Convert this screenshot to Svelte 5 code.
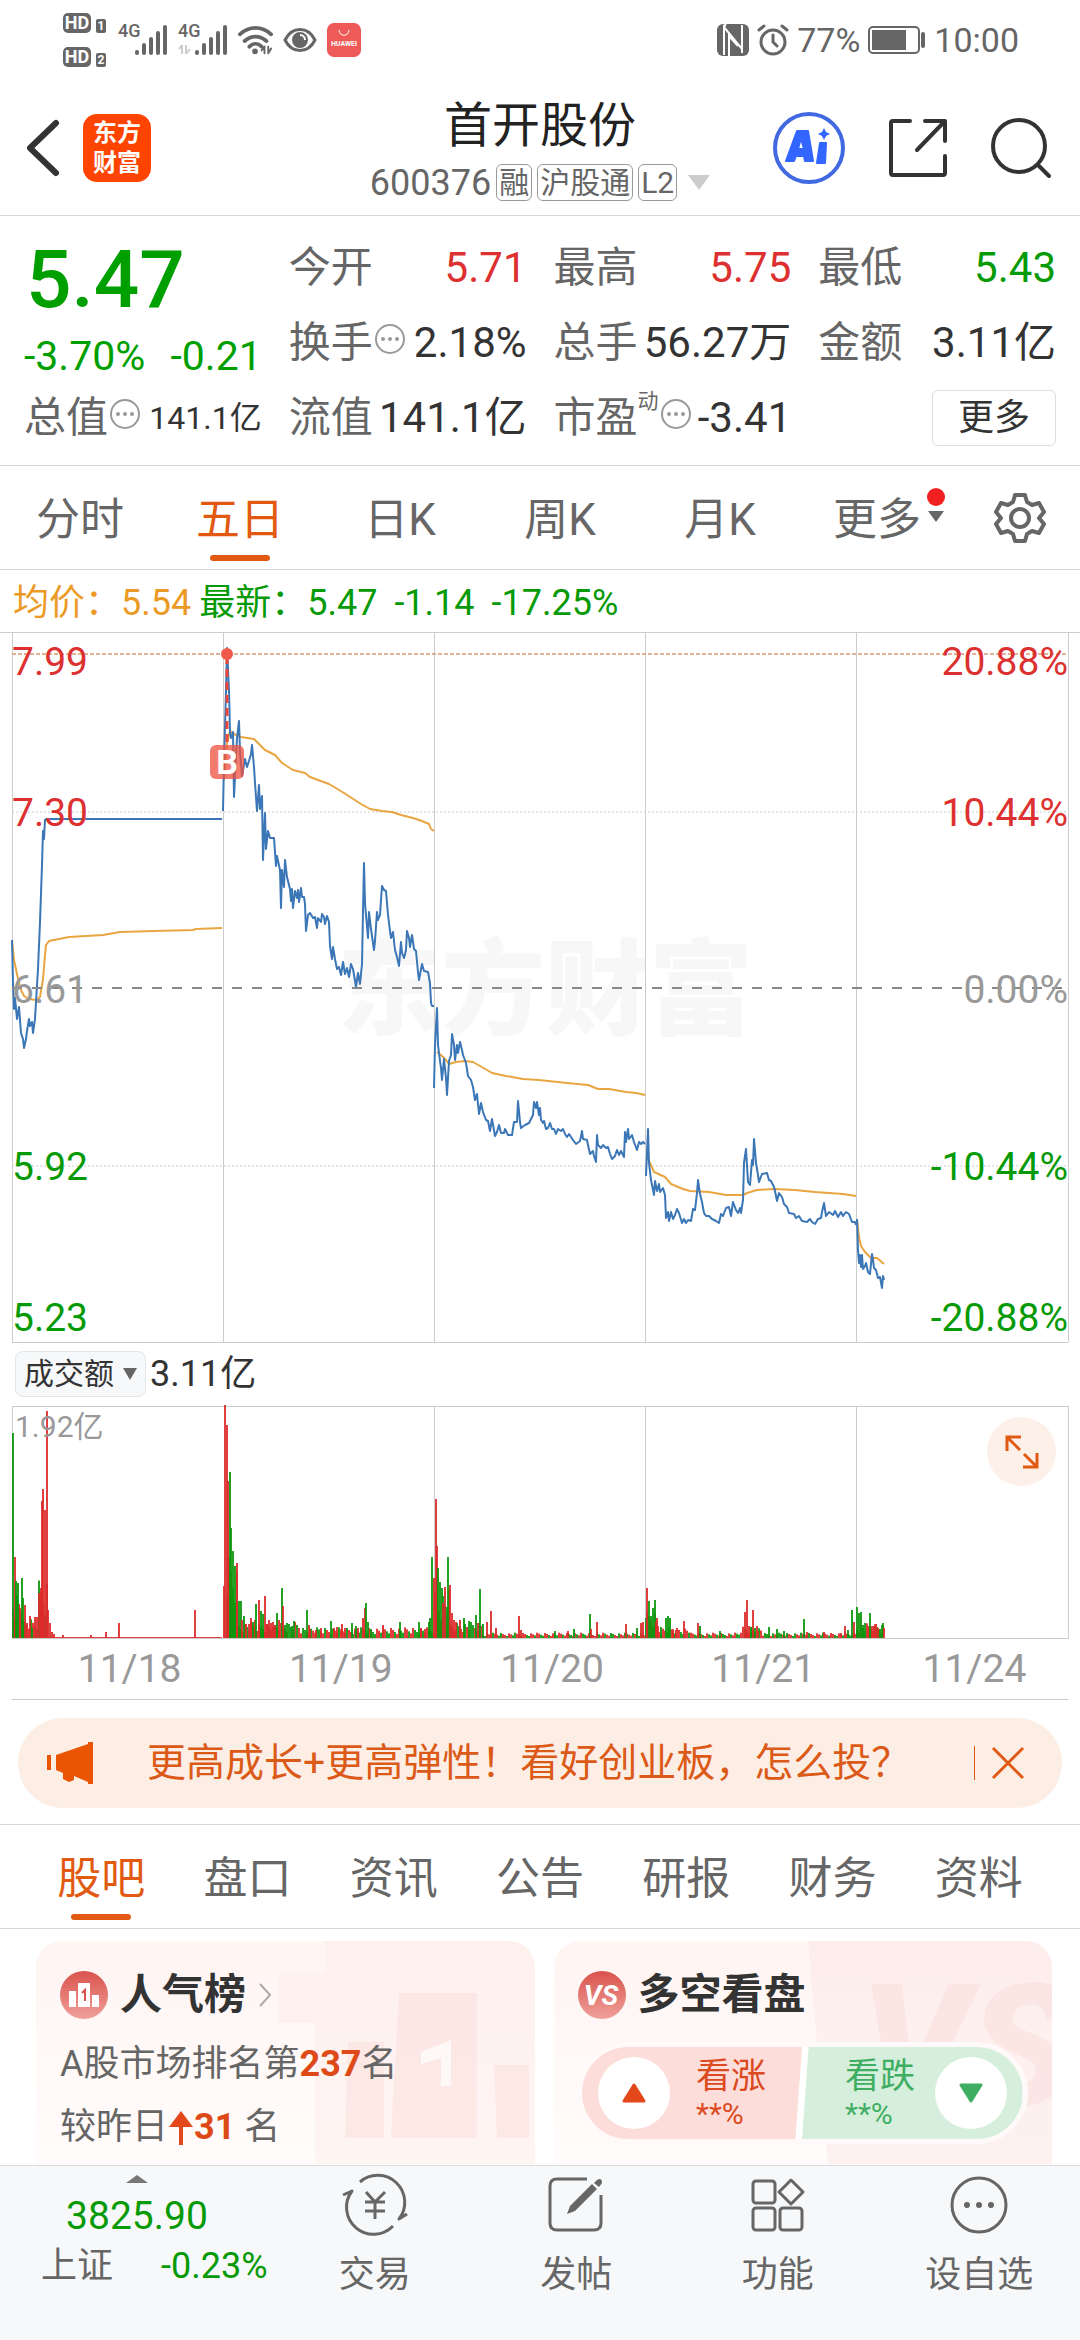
<script>
    let periods = ['分时', '五日', '日K', '周K', '月K', '更多'];
    let activePeriod = '五日';

    let sections = ['股吧', '盘口', '资讯', '公告', '研报', '财务', '资料'];
    let activeSection = '股吧';

    let showNotice = true;

    let quote = [
        { label: '今开', value: '5.71', tone: 'up' },
        { label: '最高', value: '5.75', tone: 'up' },
        { label: '最低', value: '5.43', tone: 'down' },
        { label: '换手', value: '2.18%', info: true },
        { label: '总手', value: '56.27万' },
        { label: '金额', value: '3.11亿' },
        { label: '总值', value: '141.1亿', info: true, small: true },
        { label: '流值', value: '141.1亿' },
        { label: '市盈', sup: '动', value: '-3.41', info: true }
    ];

    let dates = ['11/18', '11/19', '11/20', '11/21', '11/24'];

    // Left and right axis of the price chart
    let axis = [
        { y: 675, price: '7.99', pct: '20.88%', tone: 'up' },
        { y: 826, price: '7.30', pct: '10.44%', tone: 'up' },
        { y: 1003, price: '6.61', pct: '0.00%', tone: 'flat' },
        { y: 1180, price: '5.92', pct: '-10.44%', tone: 'down' },
        { y: 1331, price: '5.23', pct: '-20.88%', tone: 'down' }
    ];

    // One polyline per trading day
    let priceLines = [
        '12,940 13,983 14,1009 15,998 17,1019 19,1007 21,1033 23,1039 24,1048 26,1039 27,1031 29,1019 30,1026 32,1022 33,1033 35,1019 36,1002 38,969 40,922 42,865 43,831 44,839 45,820 47,819 222,819',
        '223,811 224,762 226,691 227,648 229,691 230,733 231,738 233,732 234,797 236,757 237,738 239,721 240,752 242,776 245,759 247,767 249,761 251,754 252,745 254,767 255,783 257,811 259,785 260,809 262,796 263,860 265,813 266,849 268,831 270,838 274,838 276,866 277,856 280,870 281,908 282,870 284,887 285,860 287,877 290,889 291,901 292,889 293,908 295,891 297,898 298,890 299,902 301,888 302,897 304,897 305,904 306,931 308,915 310,913 313,918 315,917 317,928 318,918 321,922 322,914 324,917 325,924 327,916 329,922 330,946 332,959 333,947 335,959 337,969 339,967 341,975 343,962 345,974 347,968 349,977 351,964 353,969 356,987 358,973 360,984 362,964 363,912 364,863 365,903 368,938 369,912 371,929 374,950 375,941 377,912 378,920 380,915 382,886 384,890 386,891 388,915 390,931 391,938 393,932 395,950 397,957 399,966 401,942 402,953 404,958 406,950 407,931 409,938 410,947 412,935 414,949 416,951 418,972 419,980 422,964 424,971 428,972 430,983 431,1003 432,1006 434,1006',
        '434,1088 435,1045 437,1008 438,1045 440,1061 441,1068 442,1080 444,1059 446,1078 447,1095 449,1061 451,1055 452,1034 454,1045 455,1060 457,1045 458,1053 460,1042 462,1050 463,1055 466,1063 468,1076 471,1080 473,1087 475,1100 477,1094 479,1114 481,1103 483,1112 486,1120 488,1121 490,1131 492,1119 495,1136 497,1132 499,1125 501,1133 504,1133 505,1129 508,1135 512,1135 514,1122 517,1122 518,1101 520,1122 521,1128 525,1125 529,1123 531,1119 533,1115 534,1102 536,1108 537,1102 539,1115 540,1108 541,1120 543,1123 544,1121 546,1129 548,1128 550,1123 552,1129 554,1129 556,1134 558,1129 561,1131 563,1129 565,1134 567,1137 569,1134 573,1140 576,1144 580,1141 582,1131 583,1139 587,1140 588,1145 590,1154 593,1151 594,1156 596,1162 597,1135 598,1145 601,1148 603,1145 606,1148 608,1147 610,1154 612,1159 615,1156 617,1150 619,1155 621,1151 624,1157 625,1132 626,1142 628,1129 629,1139 632,1135 634,1142 637,1150 639,1142 641,1144 643,1142 645,1144',
        '646,1176 648,1129 649,1163 651,1180 654,1195 655,1181 657,1191 659,1184 660,1192 663,1188 665,1195 666,1218 668,1212 669,1221 671,1212 673,1219 675,1215 677,1209 679,1213 682,1223 684,1219 686,1223 688,1220 691,1221 693,1209 695,1210 697,1193 698,1180 700,1194 702,1202 704,1213 706,1216 709,1216 712,1219 716,1221 719,1223 721,1214 723,1216 726,1208 729,1207 731,1216 733,1202 736,1210 738,1213 740,1208 741,1213 743,1200 744,1163 746,1149 748,1182 750,1185 752,1160 753,1165 754,1139 756,1163 758,1175 759,1182 762,1174 767,1173 769,1180 771,1181 774,1187 775,1191 777,1201 779,1193 782,1197 784,1204 787,1207 789,1213 794,1214 796,1218 799,1216 802,1221 807,1222 810,1219 812,1222 815,1224 818,1219 821,1218 822,1212 824,1203 826,1216 829,1212 833,1215 835,1211 838,1217 841,1212 843,1216 846,1212 849,1214 852,1222 855,1222 856,1225',
        '857,1219 858,1250 859,1263 860,1255 861,1267 862,1255 863,1269 865,1266 866,1263 868,1272 870,1274 872,1254 873,1260 874,1268 876,1270 878,1278 880,1277 882,1288 883,1276 884,1280'
    ];
    let averageLines = [
        '12,940 14,960 17,974 20,988 24,996 29,999 36,1000 40,997 43,979 45,955 46,945 49,941 69,937 103,935 120,932 155,931 193,930 196,929 222,928',
        '224,780 227,743 230,731 234,734 241,737 254,739 259,744 265,750 275,755 282,763 293,770 305,773 310,777 329,784 344,793 361,804 370,809 382,811 392,812 401,815 413,818 422,821 429,824 431,829 434,831',
        '437,1052 441,1055 446,1060 449,1064 456,1062 465,1061 473,1062 480,1066 487,1070 492,1073 506,1076 523,1079 539,1080 567,1083 588,1085 598,1089 609,1089 626,1092 636,1093 645,1095',
        '647,1157 650,1163 654,1172 665,1177 671,1184 683,1189 690,1191 709,1192 726,1195 743,1195 747,1193 757,1190 774,1189 795,1190 815,1192 843,1194 856,1196',
        '857,1219 859,1237 861,1246 865,1252 871,1258 877,1258 884,1264'
    ];

    // Turnover peaks as [x, height]; a negative height is a falling minute
    let peaks = [
        [12, -205], [14, 81], [15, -57], [17, -55], [19, 30], [21, -60], [22, -40], [24, 33], [26, 15], [29, 22], [31, -10], [34, 21], [36, 21], [38, 45], [40, 50], [41, 137], [42, 149], [44, 128], [46, 227], [47, 28], [49, 15], [51, 6], [53, 4], [62, 3], [90, 3], [105, 6], [118, 15], [194, 28],
        [223, 52], [224, 233], [226, 213], [227, 157], [229, -166], [230, -110], [232, -87], [234, -72], [236, 65], [238, -37], [240, -37], [241, 18], [243, -22], [245, 14], [248, 14], [250, 20], [252, -16], [254, 18], [255, -34], [258, 38], [260, -27], [262, -24], [264, 42], [266, 14], [268, 18], [270, 15], [272, 11], [274, 13], [276, -25], [278, 18], [281, -50], [282, 32], [284, -13], [286, -15], [291, -12], [293, -17], [306, -28], [308, 13], [309, 9], [315, 8], [320, 10], [330, -17], [333, 10], [336, 11], [341, 14], [344, 10], [351, -15], [355, -12], [357, 10], [362, 20], [364, 30], [365, -35], [367, -16], [370, -9], [382, 13], [399, -16], [418, -16], [420, 10], [424, 9], [428, -16], [429, -20], [431, -81],
        [433, 60], [435, 139], [436, 92], [437, -70], [439, -56], [441, -50], [442, 35], [444, 51], [446, -31], [447, -81], [449, 53], [451, 25], [453, 18], [455, 16], [459, 18], [463, -20], [468, -17], [475, -23], [477, 15], [479, -49], [482, -14], [486, 16], [490, 27], [495, 10], [518, 22], [520, 8], [554, -7], [567, 7], [573, -9], [589, -24], [590, 9], [596, 16], [625, 14], [636, -10], [640, 15], [642, 16], [645, -20],
        [646, 50], [648, -37], [650, -22], [652, -30], [654, -38], [655, 16], [657, 12], [660, -11], [665, -20], [667, -22], [669, -20], [672, 9], [675, 8], [683, 17], [697, 15], [699, -12], [719, -7], [744, 26], [746, 38], [748, 12], [750, -11], [752, 28], [754, -10], [757, 7], [768, -11], [776, -9], [783, -7], [803, -19], [806, 6], [823, 6], [840, 5], [844, 12], [847, -8], [851, -28], [853, 16],
        [856, -31], [858, -25], [860, -26], [862, -13], [864, -15], [867, 11], [869, -25], [871, 12], [873, 12], [875, 14], [877, 10], [879, -9], [881, -13], [882, -15], [883, 10]
    ];

    // Minutes between the peaks: [from, to, typical height]
    let quiet = [[12, 24, 34], [24, 38, 14], [38, 48, 46], [48, 222, 1], [226, 238, 60], [238, 300, 12], [300, 434, 8], [434, 450, 36], [450, 482, 12], [482, 645, 4], [646, 658, 20], [658, 690, 8], [690, 740, 4], [740, 762, 9], [762, 856, 4], [856, 884, 11]];

    let bars = [];
    for (const [from, to, size] of quiet) {
        for (let x = from; x < to; x += 2) {
            const h = size === 1 ? 1 : size / 2 + ((x * 37) % 11) * size / 12;
            bars.push([x, size === 1 || (x * 13) % 7 < 4 ? h : -h]);
        }
    }
    bars = [...bars, ...peaks];

    const verticals = [12, 223, 434, 645, 856, 1068];
</script>

<svelte:head>
    <title>首开股份 600376</title>
</svelte:head>

<div class="app">
    <div class="status">
        <div class="hd">
            {#each [1, 2] as sim}
                <span><b>HD</b><i>{sim}</i></span>
            {/each}
        </div>
        {#each [false, true] as active}
            <svg width="50" height="34" viewBox="0 0 50 34">
                <text x="0" y="14" class="net">4G</text>
                {#if active}
                    <path d="M4 22v9M4 22l-3 4M8 22v9M8 31l4-5" stroke="#ccc" stroke-width="2" fill="none"/>
                {/if}
                <path d="M19 29v1M26 22v8M33 16v14M40 10v20M47 4v26" stroke="#666" stroke-width="4" stroke-linecap="round"/>
            </svg>
        {/each}
        <svg width="35" height="34" viewBox="0 0 37 34" fill="none" stroke="#666" stroke-width="4" stroke-linecap="round">
            <path d="M2 11C12 2 25 2 35 11M7 18c7-6 16-6 23 0M12 24c4-4 9-4 13 0"/>
            <circle cx="18" cy="29" r="3" fill="#666" stroke="none"/>
            <path d="M28 24v7M28 24l-3 4M32 24v7M32 31l3-5" stroke-width="2"/>
        </svg>
        <svg width="34" height="34" viewBox="0 0 34 34">
            <path d="M2 17C9 3 25 3 32 17C25 31 9 31 2 17Z" fill="none" stroke="#666" stroke-width="3"/>
            <circle cx="17" cy="17" r="8" fill="#666"/>
            <path d="M17 12a5 5 0 0 1 5 5" stroke="#fff" stroke-width="2" fill="none"/>
        </svg>
        <div class="huawei">
            <svg width="12" height="8" viewBox="0 0 12 8"><path d="M1 1c0 7 10 7 10 0" stroke="#fff" fill="none"/></svg>
            HUAWEI
        </div>
        <div class="status-right">
            <svg width="32" height="32" viewBox="0 0 32 32">
                <rect width="32" height="32" rx="6" fill="#666"/>
                <path d="M7 31V3L25 25V1M7 3C8 1 8 1 9 0M25 29V10M12 32V12L21 22" stroke="#fff" stroke-width="2" fill="none"/>
            </svg>
            <svg width="32" height="34" viewBox="0 0 32 34" fill="none" stroke="#666" stroke-width="3" stroke-linecap="round">
                <circle cx="16" cy="19" r="12"/>
                <path d="M16 12v7l4 4M2 7l5-4M30 7l-5-4"/>
            </svg>
            <span>77%</span>
            <svg width="58" height="28" viewBox="0 0 58 28">
                <rect x="1" y="1" width="50" height="26" rx="4" fill="none" stroke="#666" stroke-width="2"/>
                <path d="M4 4H38V24H4Z" fill="#666"/>
                <rect x="53" y="6" width="4" height="16" rx="2" fill="#666"/>
            </svg>
            <span>10:00</span>
        </div>
    </div>

    <header class="header">
        <div class="side">
            <button aria-label="返回">
                <svg width="34" height="58" viewBox="0 0 34 58"><path d="M30 4L4 29L30 54" fill="none" stroke="#333" stroke-width="6" stroke-linecap="round" stroke-linejoin="round"/></svg>
            </button>
            <button class="logo"><span>东方</span><span>财富</span></button>
        </div>
        <div class="stock">
            <h1>首开股份</h1>
            <div class="code">
                <span>600376</span>
                <span class="tag">融</span>
                <span class="tag">沪股通</span>
                <span class="tag">L2</span>
                <svg width="22" height="16" viewBox="0 0 22 16"><path d="M0 0H22L11 15Z" fill="#ccc"/></svg>
            </div>
        </div>
        <div class="side actions">
            <button aria-label="AI">
                <svg width="74" height="74" viewBox="0 0 74 74">
                    <circle cx="37" cy="37" r="34" fill="none" stroke="#4169e1" stroke-width="4"/>
                    <path d="M25 20H36L41 50H33L32 45H24L22 50H14ZM29 27L26 38H32Z" fill="#3366ff" fill-rule="evenodd" stroke="#3366ff" stroke-width="2" stroke-linejoin="round"/>
                    <path d="M48 32H54L53 52H45Z" fill="#3366ff" stroke="#3366ff" stroke-width="2" stroke-linejoin="round"/>
                    <path d="M52 17L54 21L58 23L54 25L52 29L50 25L46 23L50 21Z" fill="#3366ff"/>
                </svg>
            </button>
            <button aria-label="分享">
                <svg width="60" height="60" viewBox="0 0 60 60" fill="none" stroke="#333" stroke-width="4" stroke-linecap="round" stroke-linejoin="round">
                    <path d="M22 3H5Q3 3 3 5V55Q3 57 5 57H55Q57 57 57 55V38M37 3H57V23M56 4L29 32"/>
                </svg>
            </button>
            <button aria-label="搜索">
                <svg width="62" height="62" viewBox="0 0 62 62" fill="none" stroke="#333" stroke-width="4" stroke-linecap="round">
                    <circle cx="29" cy="29" r="26"/>
                    <path d="M48 48L59 59"/>
                </svg>
            </button>
        </div>
    </header>

    <section class="quote">
        <div class="last">
            <strong>5.47</strong>
            <div class="change"><span>-3.70%</span><span>-0.21</span></div>
        </div>
        {#each quote as item}
            <div class="item">
                <span class="label">{item.label}{#if item.sup}<sup>{item.sup}</sup>{/if}</span>
                {#if item.info}
                    <svg class="info" width="30" height="30" viewBox="0 0 30 30">
                        <circle cx="15" cy="15" r="14" fill="none" stroke="#999" stroke-width="2"/>
                        <path d="M8 15h0M15 15h0M22 15h0" stroke="#999" stroke-width="4" stroke-linecap="round"/>
                    </svg>
                {/if}
                <span class="value {item.tone ?? ''}" class:small={item.small}>{item.value}</span>
            </div>
        {/each}
        <div class="item"><button class="more">更多</button></div>
    </section>

    <nav class="periods">
        {#each periods as period}
            <button class="tab" class:active={period === activePeriod} on:click={() => activePeriod = period}>
                {period}
                {#if period === '更多'}
                    <svg width="18" height="34" viewBox="0 0 18 34">
                        <circle cx="9" cy="9" r="9" fill="#f02020"/>
                        <path d="M1 23H17L9 34Z" fill="#666"/>
                    </svg>
                {/if}
            </button>
        {/each}
        <button class="gear" aria-label="设置">
            <svg width="52" height="52" viewBox="0 0 52 52" fill="none" stroke="#666" stroke-width="4" stroke-linejoin="round">
                <path d="M21 3H31L33 10L38 13L45 11L50 20L45 26L50 32L45 41L38 39L33 42L31 49H21L19 42L14 39L7 41L2 32L7 26L2 20L7 11L14 13L19 10Z"/>
                <circle cx="26" cy="26" r="9"/>
            </svg>
        </button>
    </nav>

    <div class="legend">
        <span class="avg">均价：5.54</span>
        <span>最新：5.47</span>
        <span>-1.14</span>
        <span>-17.25%</span>
    </div>

    <svg class="chart" viewBox="0 631 1080 712">
        <text class="watermark" x="545" y="1027" text-anchor="middle">东方财富</text>
        <path d="M0 632H1080M12 1342H1068" class="grid"/>
        {#each verticals as x}
            <path d="M{x} 632V1342" class="grid"/>
        {/each}
        <path d="M12 654H1068" stroke="#d9a07a" stroke-width="2" stroke-opacity="0.8" stroke-dasharray="4 2"/>
        <path d="M12 812H1068M12 1166H1068" stroke="#ccc" stroke-dasharray="2 2"/>
        {#each averageLines as points}
            <polyline {points} class="average"/>
        {/each}
        {#each priceLines as points}
            <polyline {points} class="price"/>
        {/each}
        <path d="M12 988H1068" stroke="#888" stroke-width="2" stroke-dasharray="10 10"/>
        {#each axis as row}
            <text class="axis {row.tone}" x="12" y={row.y}>{row.price}</text>
            <text class="axis {row.tone}" x="1068" y={row.y} text-anchor="end">{row.pct}</text>
        {/each}
        <path d="M227 656V746" stroke="#e8483c" stroke-width="3" stroke-dasharray="8 5"/>
        <circle cx="227" cy="654" r="6" fill="#f05a4a"/>
        <rect x="210" y="745" width="34" height="34" rx="6" fill="#f0503f" fill-opacity="0.75"/>
        <text class="buy" x="227" y="774" text-anchor="middle">B</text>
    </svg>

    <div class="indicator">
        <button>成交额<svg width="14" height="12" viewBox="0 0 14 12"><path d="M0 0H14L7 12Z" fill="#666"/></svg></button>
        <span>3.11亿</span>
    </div>

    <div class="volume">
        <svg class="chart" viewBox="0 0 1080 234">
            <path d="M12 1H1068V233H12Z" class="grid"/>
            {#each [434, 645, 856] as x}
                <path d="M{x} 1V233" class="grid"/>
            {/each}
            {#each bars as [x, h]}
                <rect {x} y={233 - Math.abs(h)} width="2" height={Math.abs(h)} fill={h > 0 ? '#dc2a2a' : '#0c960c'} fill-opacity="0.9"/>
            {/each}
            <text class="peak" x="15" y="32">1.92亿</text>
        </svg>
        <button class="expand" aria-label="全屏">
            <svg width="36" height="36" viewBox="0 0 36 36" fill="none" stroke="#e05a14" stroke-width="3">
                <path d="M3 17V3H17M3 3L16 16M20 20L33 33M19 33H33V19"/>
            </svg>
        </button>
    </div>
    <div class="dates">
        {#each dates as date}
            <span>{date}</span>
        {/each}
    </div>
    <hr>

    {#if showNotice}
        <div class="notice">
            <svg width="46" height="42" viewBox="0 0 46 42">
                <path d="M0 13H4V28H0ZM9 13L41 2V0H46V42H41V40L27 34V38L22 40L16 37V31L9 28Z" fill="#ea5504"/>
            </svg>
            <a href="#notice">更高成长+更高弹性！看好创业板，怎么投？</a>
            <button aria-label="关闭" on:click={() => showNotice = false}>
                <svg width="34" height="34" viewBox="0 0 34 34"><path d="M2 2L32 32M32 2L2 32" stroke="#e05a14" stroke-width="3"/></svg>
            </button>
        </div>
    {/if}

    <nav class="sections">
        {#each sections as section}
            <button class="tab" class:active={section === activeSection} on:click={() => activeSection = section}>{section}</button>
        {/each}
    </nav>

    <div class="cards">
        <section class="card">
            <svg class="deco" width="270" height="223" viewBox="0 0 270 223" fill="#fbe3e0">
                <path d="M14 32H60V0H270V223H50V82H14Z" fill-opacity="0.3"/>
                <path d="M83 101H119V197H80ZM134 52H212V197H126ZM229 124H264V197H232Z" fill-opacity="0.7"/>
                <path d="M156 111L186 99V145H176V117L156 123Z" fill="#fff" fill-opacity="0.7"/>
            </svg>
            <h2>
                <svg width="48" height="48" viewBox="0 0 48 48">
                    <defs><linearGradient id="badge" x2="0" y2="1"><stop stop-color="#d9534c"/><stop offset="1" stop-color="#f0a09a"/></linearGradient></defs>
                    <circle cx="24" cy="24" r="24" fill="url(#badge)"/>
                    <path d="M9 20H16V36H9ZM18 12H30V36H18ZM32 24H39V36H32Z" fill="#fff"/>
                    <path d="M22 22L25 19V30" stroke="#d9534c" stroke-width="2" fill="none"/>
                </svg>
                人气榜
                <svg width="14" height="26" viewBox="0 0 14 26"><path d="M2 2L12 13L2 24" fill="none" stroke="#aaa" stroke-width="2"/></svg>
            </h2>
            <p>A股市场排名第<b>237</b>名</p>
            <p>较昨日<svg width="26" height="34" viewBox="0 0 26 34"><path d="M13 0L25 16H15V34H11V16H1Z" fill="#e2481a"/></svg><b>31</b> 名</p>
        </section>
        <section class="card">
            <svg class="deco" width="244" height="223" viewBox="0 0 244 223">
                <path d="M0 0H244V223H20Z" fill="#fbe3e0" fill-opacity="0.4"/>
                <text class="deco-vs" x="52" y="164">VS</text>
            </svg>
            <h2>
                <svg width="48" height="48" viewBox="0 0 48 48">
                    <circle cx="24" cy="24" r="24" fill="url(#badge)"/>
                    <text class="vs" x="23" y="34" text-anchor="middle">VS</text>
                </svg>
                多空看盘
            </h2>
            <div class="vote">
                <button class="bull">
                    <span class="knob"><svg width="24" height="20" viewBox="0 0 24 20"><path d="M12 2L22 18H2Z" fill="#e2481a" stroke="#e2481a" stroke-width="3" stroke-linejoin="round"/></svg></span>
                    <span>看涨<small>**%</small></span>
                </button>
                <button class="bear">
                    <span>看跌<small>**%</small></span>
                    <span class="knob"><svg width="24" height="20" viewBox="0 0 24 20"><path d="M12 18L22 2H2Z" fill="#3fae63" stroke="#3fae63" stroke-width="3" stroke-linejoin="round"/></svg></span>
                </button>
            </div>
        </section>
    </div>

    <footer class="bottom">
        <button class="index">
            <svg width="22" height="8" viewBox="0 0 22 8"><path d="M0 8L11 0L22 8Z" fill="#777"/></svg>
            <strong>3825.90</strong>
            <span class="index-row"><span>上证</span><span class="down">-0.23%</span></span>
        </button>
        <button>
            <svg width="66" height="60" viewBox="0 0 66 60" fill="none" stroke="#666" stroke-width="3" stroke-linejoin="round">
                <path d="M18 7A27 27 0 0 1 57 44L65 39M51 51A27 27 0 0 1 10 16L1 20"/>
                <path d="M24 17L33 27L43 17M33 27V44M23 27H43M23 36H43"/>
            </svg>
            交易
        </button>
        <button>
            <svg width="60" height="60" viewBox="0 0 60 60" fill="none" stroke="#666" stroke-width="3">
                <path d="M41 4H11Q4 4 4 11V48Q4 55 11 55H48Q55 55 55 48V20"/>
                <path d="M21 39L24 31L46 9L51 14L29 36ZM48 8L51 5Q56 2 56 8L53 12Z" fill="#666" stroke="none"/>
            </svg>
            发帖
        </button>
        <button>
            <svg width="60" height="60" viewBox="0 0 60 60" fill="none" stroke="#666" stroke-width="3">
                <rect x="5" y="6" width="22" height="22" rx="3"/>
                <rect x="5" y="33" width="22" height="22" rx="3"/>
                <rect x="32" y="33" width="22" height="22" rx="3"/>
                <path d="M43 5L55 17L43 29L31 17Z" stroke-linejoin="round"/>
            </svg>
            功能
        </button>
        <button>
            <svg width="60" height="60" viewBox="0 0 60 60" fill="none" stroke="#666" stroke-width="3">
                <circle cx="30" cy="30" r="27"/>
                <path d="M18 30h0M30 30h0M42 30h0" stroke-width="6" stroke-linecap="round"/>
            </svg>
            设自选
        </button>
    </footer>
</div>

<style>
    :global(body) {
        background: #fff;
    }

    .app {
        display: flex;
        flex-direction: column;
        min-height: 100vh;
        font-family: Roboto, "Noto Sans CJK SC", sans-serif;
        color: #666;
    }

    .app svg {
        display: block;
        flex-shrink: 0;
        overflow: visible;
    }

    button {
        padding: 0;
        border: none;
        background: none;
        font: inherit;
        color: inherit;
        cursor: pointer;
    }

    .up { color: #dd3030; fill: #dd3030; }
    .down { color: #069a06; fill: #069a06; }
    .flat { fill: #999; }

    /* Phone status bar */
    .status {
        display: flex;
        align-items: center;
        gap: 10px;
        height: 80px;
        padding: 0 61px 0 63px;
    }

    .hd {
        display: flex;
        flex-direction: column;
        gap: 14px;
        margin-right: 2px;
    }

    .hd span {
        display: flex;
        align-items: flex-end;
        gap: 5px;
    }

    .hd b {
        width: 28px;
        border-radius: 5px;
        background: #666;
        color: #fff;
        font-size: 18px;
        line-height: 20px;
        text-align: center;
    }

    .hd i {
        width: 10px;
        border-radius: 2px;
        background: #666;
        color: #fff;
        font-size: 12px;
        font-style: normal;
        font-weight: 700;
        line-height: 14px;
        text-align: center;
    }

    .net {
        font-size: 18px;
        font-weight: 500;
        fill: #666;
    }

    .huawei {
        display: flex;
        flex-direction: column;
        align-items: center;
        gap: 2px;
        width: 34px;
        height: 28px;
        padding-top: 6px;
        border-radius: 7px;
        background: #ed5a58;
        color: #fff;
        font-size: 7px;
        font-weight: 700;
        line-height: 10px;
    }

    .status-right {
        display: flex;
        align-items: center;
        gap: 8px;
        margin-left: auto;
        font-size: 34px;
        line-height: 40px;
    }

    /* Title bar */
    .header {
        display: grid;
        grid-template-columns: 1fr auto 1fr;
        align-items: center;
        height: 135px;
        border-bottom: 1px solid #d8d8d8;
    }

    .side {
        display: flex;
        align-items: center;
        gap: 23px;
        padding-left: 26px;
    }

    .actions {
        justify-content: flex-end;
        gap: 42px;
        padding: 0 28px 0 0;
    }

    .logo {
        display: flex;
        flex-direction: column;
        align-items: center;
        justify-content: center;
        width: 68px;
        height: 68px;
        border-radius: 14px;
        background: #ff4400;
        color: #fff;
        font-size: 24px;
        font-weight: 700;
        line-height: 30px;
    }

    .stock {
        display: flex;
        flex-direction: column;
        align-items: center;
    }

    h1 {
        margin: 0;
        color: #222;
        font-size: 48px;
        font-weight: 400;
        line-height: 70px;
    }

    .code {
        display: flex;
        align-items: center;
        gap: 5px;
        font-size: 36px;
        line-height: 44px;
    }

    .tag {
        padding: 0 2px;
        border: 1px solid #999;
        border-radius: 6px;
        font-size: 30px;
        line-height: 35px;
    }

    .code svg {
        margin-left: 6px;
    }

    /* Quote figures */
    .quote {
        display: grid;
        grid-template-columns: repeat(4, 1fr);
        grid-auto-rows: 75px;
        column-gap: 27px;
        padding: 14px 24px 10px;
        border-bottom: 1px solid #d8d8d8;
    }

    .last {
        grid-row: span 2;
        color: #009f00;
    }

    .last strong {
        display: block;
        padding-left: 2px;
        font-size: 80px;
        font-weight: 500;
        line-height: 100px;
    }

    .change {
        display: flex;
        justify-content: space-between;
        font-size: 41px;
        line-height: 52px;
        white-space: nowrap;
    }

    .item {
        display: flex;
        align-items: center;
        font-size: 42px;
        line-height: 50px;
        white-space: nowrap;
    }

    sup {
        font-size: 21px;
        line-height: 0;
        vertical-align: 24px;
    }

    .value {
        margin-left: auto;
    }

    .value:not(.up):not(.down) {
        color: #333;
    }

    .small {
        font-size: 32px;
    }

    .more {
        width: 124px;
        height: 56px;
        margin-left: auto;
        border: 1px solid #ddd;
        border-radius: 6px;
        color: #333;
        font-size: 36px;
        line-height: 50px;
    }

    .info {
        margin: 0 2px 8px;
    }

    /* Tab rows */
    .periods,
    .sections {
        display: flex;
        height: 103px;
        border-bottom: 1px solid #d8d8d8;
    }

    .sections {
        padding: 0 28px;
    }

    .tab {
        position: relative;
        flex: 4;
        display: flex;
        align-items: center;
        justify-content: center;
        padding-top: 4px;
        font-size: 44px;
        line-height: 60px;
    }

    .tab.active {
        color: #e25a12;
    }

    .tab.active::after {
        content: "";
        position: absolute;
        left: 50%;
        bottom: 8px;
        width: 60px;
        height: 6px;
        margin-left: -30px;
        border-radius: 3px;
        background: #e25a12;
    }

    /* Hangs past the label so the label stays centred */
    .tab svg {
        margin: 0 -18px 30px 6px;
    }

    .gear {
        flex: 3;
        display: flex;
        align-items: center;
        justify-content: center;
    }

    .legend {
        display: flex;
        gap: 17px;
        padding: 6px 0 0 13px;
        color: #069a06;
        font-size: 36px;
        line-height: 55px;
    }

    .avg {
        margin-right: -9px;
        color: #eb9a26;
    }

    /* Charts */
    .chart {
        width: 100%;
        height: auto;
    }

    .grid {
        fill: none;
        stroke: #ccc;
        stroke-width: 1;
        shape-rendering: crispEdges;
    }

    .price,
    .average {
        fill: none;
        stroke: #3b76b6;
        stroke-width: 2;
        stroke-linejoin: round;
    }

    .average {
        stroke: #e9a541;
    }

    .axis {
        font-size: 39px;
    }

    .watermark {
        font-size: 104px;
        font-weight: 900;
        fill: #f7f7f7;
    }

    .buy {
        font-size: 34px;
        font-weight: 700;
        fill: #fff;
    }

    .peak {
        font-size: 30px;
        fill: #999;
    }

    .indicator {
        display: flex;
        align-items: center;
        gap: 4px;
        height: 62px;
        color: #333;
        padding-left: 15px;
        font-size: 36px;
        line-height: 44px;
    }

    .indicator button {
        display: flex;
        align-items: center;
        gap: 9px;
        height: 46px;
        padding: 0 8px;
        border: 1px solid #e3e5e8;
        border-radius: 8px;
        background: #f7f8fa;
        font-size: 30px;
    }

    .volume {
        position: relative;
    }

    .expand {
        position: absolute;
        top: 12px;
        right: 24px;
        display: flex;
        align-items: center;
        justify-content: center;
        width: 69px;
        height: 69px;
        border-radius: 50%;
        background: #fdf0e9;
    }

    .dates {
        display: flex;
        padding-left: 24px;
        color: #999;
        font-size: 39px;
        line-height: 60px;
    }

    .dates span {
        flex: 1;
        text-align: center;
    }

    hr {
        width: auto;
        height: 1px;
        margin: 0 12px;
        border: none;
        background: #ccc;
    }

    /* Notice strip */
    .notice {
        display: flex;
        align-items: center;
        height: 90px;
        margin: 18px 18px 0;
        padding: 0 37px 0 29px;
        border-radius: 45px;
        background: #fceee5;
    }

    .notice a {
        flex: 1;
        margin-left: 54px;
        color: #dc5a18;
        font-size: 39px;
        line-height: 60px;
        text-decoration: none;
        white-space: nowrap;
    }

    .notice button {
        padding-left: 16px;
        border-left: 1px solid #dc5a18;
    }

    .sections {
        margin-top: 16px;
        border-top: 1px solid #d8d8d8;
    }

    /* Cards */
    .cards {
        flex: 1;
        display: grid;
        grid-template-columns: 1fr 1fr;
        gap: 19px;
        padding: 12px 28px 0 36px;
    }

    .card {
        position: relative;
        overflow: hidden;
        padding: 28px 24px 0;
        border-radius: 26px 26px 0 0;
        background: linear-gradient(#fff5f3, #fffcfb);
    }

    .deco {
        position: absolute;
        top: 0;
        right: 0;
    }

    .deco-vs {
        font-size: 170px;
        font-style: italic;
        font-weight: 900;
        fill: #fae0dd;
        fill-opacity: 0.6;
    }

    .vs {
        font-size: 28px;
        font-style: italic;
        font-weight: 700;
        fill: #fff;
    }

    h2 {
        position: relative;
        display: flex;
        align-items: center;
        gap: 12px;
        margin: 0 0 12px;
        color: #333;
        font-size: 42px;
        font-weight: 700;
        line-height: 52px;
    }

    .card p {
        position: relative;
        display: flex;
        align-items: center;
        margin: 0;
        font-size: 36px;
        line-height: 63px;
        white-space: pre;
    }

    .card b {
        color: #dd4a18;
    }

    .vote {
        position: relative;
        display: flex;
        width: 441px;
        height: 92px;
        margin: 26px 4px;
        border-radius: 46px;
        background: #fff;
        box-shadow: 0 0 0 5px #fffaf9;
    }

    .vote button {
        position: relative;
        z-index: 0;
        flex: 0 0 50%;
        display: flex;
        align-items: center;
        justify-content: space-between;
        padding: 0 36px 0 16px;
        color: #db4a20;
        font-size: 35px;
        line-height: 42px;
        text-align: left;
    }

    .vote .bear {
        padding: 0 16px 0 43px;
        color: #3fae63;
    }

    /* Slanted halves behind the labels */
    .vote button::before {
        content: "";
        position: absolute;
        inset: 0;
        z-index: -1;
        border-radius: 46px 0 0 46px;
        background: #fdddd9;
        clip-path: polygon(0 0, 100% 0, 97% 100%, 0 100%);
    }

    .vote .bear::before {
        border-radius: 0 46px 46px 0;
        background: #d6efdc;
        clip-path: polygon(3% 0, 100% 0, 100% 100%, 0 100%);
    }

    .vote small {
        display: block;
        font-size: 30px;
        line-height: 32px;
    }

    .knob {
        display: flex;
        align-items: center;
        justify-content: center;
        width: 72px;
        height: 72px;
        border-radius: 50%;
        background: #fff;
    }

    /* Bottom bar */
    .bottom {
        position: sticky;
        bottom: 0;
        display: flex;
        height: 175px;
        border-top: 1px solid #d8dadc;
        background: #f7f8fa;
    }

    .bottom button {
        flex: 1;
        display: flex;
        flex-direction: column;
        align-items: center;
        gap: 15px;
        padding-top: 9px;
        font-size: 36px;
        line-height: 50px;
    }

    .bottom .index {
        flex: 0 0 274px;
        gap: 0;
    }

    .index strong {
        margin-top: 8px;
        color: #069a06;
        font-size: 39px;
        font-weight: 400;
    }

    .index-row {
        display: flex;
        align-self: flex-start;
        gap: 48px;
        padding-left: 41px;
    }
</style>
